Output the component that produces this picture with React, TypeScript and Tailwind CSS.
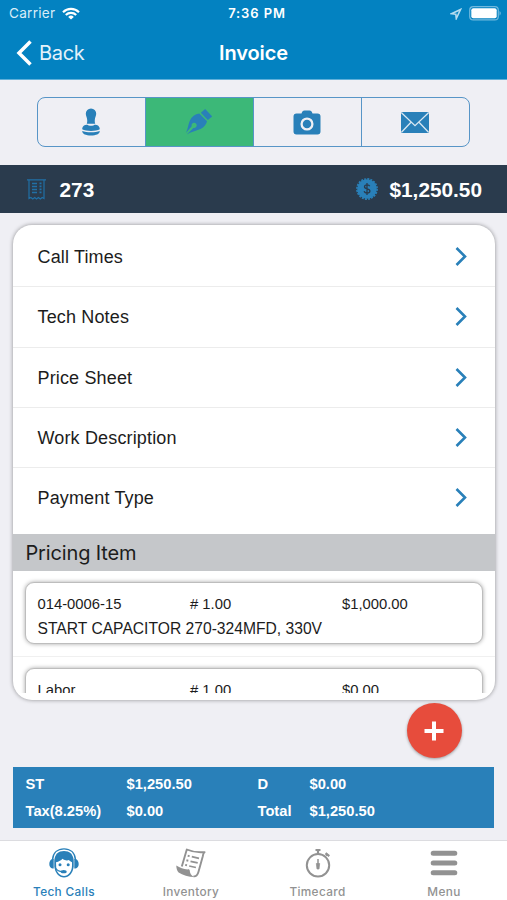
import React from "react";

const menuRows = [
  "Call Times",
  "Tech Notes",
  "Price Sheet",
  "Work Description",
  "Payment Type",
];

const pricingItems = [
  {
    code: "014-0006-15",
    qty: "# 1.00",
    price: "$1,000.00",
    description: "START CAPACITOR 270-324MFD, 330V",
  },
  { code: "Labor", qty: "# 1.00", price: "$0.00", description: "" },
];

const StampIcon = () => (
  <svg width="20" height="28" viewBox="0 0 20 28" fill="#2980b9">
    <path d="M10 .5a5.200 5.200 0 0 1 5.200 5.300c0 2.200-1.300 3.700-1.400 6.200-.1 1.800.1 3.200.5 3.700H5.700c.4-.5.6-1.900.5-3.700C6.100 9.500 4.800 8 4.800 5.800A5.200 5.200 0 0 1 10 .5z" />
    <path d="M1.200 21.300C1.200 18 3.500 16.700 6.500 16.700c1 1.400 6 1.400 7 0 3 0 5.300 1.300 5.300 4.600-4 2.100-13.600 2.100-17.600 0z" />
    <path d="M1.200 23c4.500 1.800 13.100 1.800 17.600 0 0 3-3.800 4.500-8.800 4.500S1.200 26 1.200 23z" />
  </svg>
);

const PenIcon = () => (
  <svg width="28" height="28" viewBox="0 0 28 28" fill="#2980b9">
    <path d="m20.200 1 7 7.500-4.400 3.500-7-7.200z" />
    <path d="M14.300 5.500 22 13.300c-.6 3-2.700 6-6.500 7.700C11 23 6 23.700 1.700 26.600l6.700-6.700a2.600 2.600 0 1 0-1.700-1.600L.9 25C3 20.500 3.200 16 5 12.200c1.700-3.700 5-6 9.300-6.700z" />
  </svg>
);

const CameraIcon = () => (
  <svg width="28" height="25" viewBox="0 0 28 25">
    <path
      d="M8.500 3.500C9.200 1.500 9.800.500 11.500.500h5c1.700 0 2.300 1 3 3h5a3 3 0 0 1 3 3v15a3 3 0 0 1-3 3h-21a3 3 0 0 1-3-3v-15a3 3 0 0 1 3-3z"
      fill="#2980b9"
    />
    <circle cx="14" cy="14" r="5.400" fill="none" stroke="#efeff4" strokeWidth="2.300" />
  </svg>
);

const MailIcon = () => (
  <svg width="28" height="21" viewBox="0 0 28 21">
    <rect width="28" height="21" rx="1.500" fill="#2980b9" />
    <path
      d="M.5.800 14 13.700 27.500.800M.5 20.200 10 10.200M27.500 20.200 18 10.200"
      fill="none"
      stroke="#d9e7f2"
      strokeWidth="1.300"
    />
  </svg>
);

const ReceiptIcon = () => (
  <svg width="19" height="21" viewBox="0 0 19 21" fill="none" stroke="#2170a6" strokeWidth="1.200">
    <path d="M0 .800h19M2 1v18.500l1.900-1 1.900 1.500 1.900-1.500L9.500 20l1.900-1.500 1.900 1.500 1.900-1.500 1.800 1V1" />
    <path d="M5 4.500h5M5 7.500h5M5 10.500h5M5 13.500h5" strokeWidth="1.700" />
    <path d="M13.500 3.500v12" strokeWidth="2" strokeDasharray="1.700 1.300" />
  </svg>
);

const DollarBadge = () => (
  <svg width="22" height="22" viewBox="0 0 22 22">
    <circle cx="11" cy="11" r="9.800" fill="#2980b9" />
    <circle cx="11" cy="11" r="10.100" fill="none" stroke="#2980b9" strokeWidth="1.600" strokeDasharray="2 1.173" />
    <path
      d="M13.700 8.300c-.3-1-1.300-1.500-2.600-1.500-1.500 0-2.600.7-2.600 1.900 0 2.900 5.400 1.400 5.400 4.300 0 1.300-1.100 2.100-2.800 2.100-1.600 0-2.700-.7-2.900-1.900M11 5v12"
      fill="none"
      stroke="#2a3b4d"
      strokeWidth="1.300"
    />
  </svg>
);

const HeadsetIcon = () => (
  <svg width="30" height="30" viewBox="0 0 30 30" fill="#2980b9">
    <path d="M3.500 12C4 4.500 9 .900 15 .900s11 3.600 11.500 11.100" fill="none" stroke="#2980b9" strokeWidth="1.400" />
    <path d="M5.300 12C6 6 9.500 2.900 15 2.900S24 6 24.700 12v6.500c-.7 6.500-4.700 11-9.700 11s-9-4.500-9.700-11z" />
    <path
      d="M7 14.200c2.900-.5 5.200-1.800 6.400-3.400 2.200 1.600 4.500 2 6.600 1.300.7 1.100 1.800 1.800 3 2.200v3.500c0 5.700-3.700 10.200-8 10.200-3.500 0-6.700-3-7.700-7z"
      fill="#fff"
    />
    <path d="M4.700 11v9.500H3.500C1.500 20.200.300 18.500.300 16s1.200-4.700 3.200-5zM25.300 11v9.500h1.200c2-.3 3.200-2 3.200-4.500s-1.200-4.700-3.200-5z" />
    <circle cx="11" cy="16.700" r="1.500" />
    <circle cx="19.200" cy="16.700" r="1.500" />
    <path d="M6.500 20c1.700 2.700 4 3.600 7 3.600" fill="none" stroke="#2980b9" strokeWidth="1.300" />
    <ellipse cx="14.700" cy="23.700" rx="3" ry="1.600" />
  </svg>
);

const InventoryIcon = () => (
  <svg width="30" height="30" viewBox="0 0 30 30" fill="none" stroke="#929292">
    <path
      d="M5.800 18.500 10.800 1.500c5.500 2.400 11.500 3.200 17.800 2.600-1.600 1-1.400 2.400-1.800 4.200l-4.300 15.400c-.9 3.200-2.600 5-5 4.600"
      strokeWidth="1.900"
      strokeLinejoin="round"
    />
    <path
      d="M.300 17.500c3.700 2.300 7.200 3.500 11.200 3.900 1.100-.5 2 0 2.200.9.200 2.900 1.200 5.300 4.700 6.800-5.600-.2-11.900-1.900-15.800-4.600C.900 22.500.300 20 .300 17.500z"
      fill="#929292"
      stroke="none"
    />
    <path d="m15.800 8.700 7.200 1.600M14.500 13.300l7.200 1.600M13.200 18l6.700 1.500" strokeWidth="1.700" />
    <path d="m11.700 7.700 1.900.4M10.400 12.300l1.900.4M9.200 16.900l1.800.4" strokeWidth="1.900" />
  </svg>
);

const TimerIcon = () => (
  <svg width="26" height="30" viewBox="0 0 26 30" fill="none" stroke="#929292">
    <circle cx="13" cy="17.300" r="11.200" strokeWidth="2" />
    <path d="M10.500 2h5M13 1.500v5M21 7.500l1.500-1.800" strokeWidth="2.200" />
    <path d="m20.600 5.200 3.700 3" strokeWidth="2.200" />
    <path d="M13 11v6" strokeWidth="1.500" />
    <path d="M11.300 15.500h3.400L14 21h-2z" fill="#929292" strokeWidth=".7" />
  </svg>
);

const MenuIcon = () => (
  <svg width="28" height="26" viewBox="0 0 28 26" stroke="#929292" strokeWidth="5" strokeLinecap="round">
    <path d="M3.200 3.300h21.600M3.200 13h21.600M3.200 22.700h21.600" />
  </svg>
);

const actions = [StampIcon, PenIcon, CameraIcon, MailIcon];

const tabs = [
  { title: "Tech Calls", icon: HeadsetIcon },
  { title: "Inventory", icon: InventoryIcon },
  { title: "Timecard", icon: TimerIcon },
  { title: "Menu", icon: MenuIcon },
];

const Header = () => {
  return (
    <header className="h-[80px] bg-[#0382c1] border-b border-[#5fb0da] text-white font-['Inter',sans-serif]">
      <div className="grid grid-cols-3 items-center h-[27px] pl-[9px] pr-[6px] text-[13px]">
        <div className="flex items-center gap-[7px]">
          <span className="text-[13.6px] text-[#d9edf8] tracking-[0.25px]">Carrier</span>
          <svg width="18" height="13" viewBox="0 0 18 13" fill="none" stroke="#fff" strokeWidth="2.200">
            <path d="M1 5.200a11.500 11.500 0 0 1 16 0M3.800 8a7.500 7.500 0 0 1 10.400 0" />
            <path d="M9 12.500 6.200 9.900a4 4 0 0 1 5.600 0z" fill="#fff" stroke="none" />
          </svg>
        </div>
        <p className="text-center font-semibold tracking-[0.9px] pl-[4px]">7:36 PM</p>
        <div className="flex items-center justify-end gap-[7px]">
          <svg width="12" height="12" viewBox="0 0 12 12" fill="none" stroke="#b5dcef" strokeWidth="1.600">
            <path d="M10.500 1.500 1.500 5.700l4.300.5.500 4.300z" />
          </svg>
          <svg width="32" height="15" viewBox="0 0 32 15">
            <rect x=".7" y=".7" width="28.600" height="13.200" rx="3.500" fill="none" stroke="#71b9de" strokeWidth="1.200" />
            <rect x="2.300" y="2.300" width="25.400" height="10" rx="2" fill="#fff" />
            <path d="M30.500 5v4.600c1.700-.8 1.700-3.800 0-4.600z" fill="#71b9de" />
          </svg>
        </div>
      </div>
      <div className="grid grid-cols-3 items-center h-[51px]">
        <div className="flex items-center gap-[7px] pl-4">
          <svg width="16" height="26" viewBox="0 0 16 26" fill="none" stroke="#fff" strokeWidth="3.500">
            <path d="M14.500 1.500 3 13l11.500 11.500" />
          </svg>
          <span className="text-[20px] text-[#e3f2fa] tracking-[-0.3px]">Back</span>
        </div>
        <p className="text-center text-[20px] font-semibold tracking-[-0.1px]">Invoice</p>
      </div>
    </header>
  );
};

const PricingCard = ({ item }: { item: (typeof pricingItems)[number] }) => {
  return (
    <div className="px-3 pt-[11px] pb-3 border-b border-[#f0f0f0]">
      <div className="h-[62px] rounded-[9px] border border-[#bdbdbd] bg-white shadow-[0_0_4px_rgba(0,0,0,0.35)] pl-[11.500px] pt-[11px]">
        <div className="grid grid-cols-[152.500px_152px_1fr] text-[14.8px] leading-[21px]">
          <p>{item.code}</p>
          <p>{item.qty}</p>
          <p>{item.price}</p>
        </div>
        <p className="text-[15.650px] leading-[27px]">{item.description}</p>
      </div>
    </div>
  );
};

const App = () => {
  return (
    <div className="w-[507px] h-[900px] overflow-hidden flex flex-col bg-[#efeff4] font-['Liberation_Sans',sans-serif] text-[#1c1c1c]">
      <Header />

      <div className="mt-[17px] ml-[37px] w-[433px] h-[50px] flex shrink-0 overflow-hidden rounded-[8px] border-[1.5px] border-[#5795c7] divide-x divide-[#5795c7]">
        {actions.map((Icon, i) => {
          return (
            <div
              key={i}
              className={`flex-1 flex items-center justify-center pr-[1.500px] ${i === 1 ? "bg-[#3cb878]" : ""}`}
            >
              <Icon />
            </div>
          );
        })}
      </div>

      <div className="mt-[18px] h-[48px] shrink-0 bg-[#2a3b4d] text-white font-bold text-[20.800px] flex items-center justify-between pl-[27px] pr-[25px]">
        <div className="flex items-center gap-[13.500px]">
          <ReceiptIcon />
          <p className="pt-[2px]">273</p>
        </div>
        <div className="flex items-center gap-[11px]">
          <DollarBadge />
          <p className="pt-[2px]">$1,250.50</p>
        </div>
      </div>

      <div className="mt-3 mx-[13px] w-[482px] h-[475px] shrink-0 rounded-[19px] bg-white overflow-hidden pb-[7px] shadow-[0_0_4px_rgba(0,0,0,0.4)]">
        <div className="h-[468px] overflow-hidden">
          <div className="h-[309px] pt-[2px]">
            {menuRows.map((row) => {
              return (
                <div
                  key={row}
                  className="h-[60.250px] flex items-center justify-between pl-[24.500px] pr-[28px] border-b border-[#ececec] last:border-transparent"
                >
                  <p className="text-[18px] tracking-[0.15px] pt-[2px]">{row}</p>
                  <svg width="12" height="19" viewBox="0 0 12 19" fill="none" stroke="#2980b9" strokeWidth="2.600">
                    <path d="m1.500 1 8.500 8.500L1.500 18" />
                  </svg>
                </div>
              );
            })}
          </div>
          <p className="h-[37px] bg-[#c5c7ca] pl-[12.500px] text-[20px] leading-[39px] font-['Inter',sans-serif] tracking-[-0.15px]">
            Pricing Item
          </p>
          {pricingItems.map((item) => {
            return <PricingCard key={item.code} item={item} />;
          })}
        </div>
      </div>

      <div className="h-[67px] shrink-0 flex justify-end pt-[3px] pr-[45.500px]">
        <button className="w-[55px] h-[55px] rounded-full bg-[#e74c3c] flex items-center justify-center shadow-[0_1px_3px_rgba(0,0,0,0.35)]">
          <svg width="20" height="20" viewBox="0 0 20 20" stroke="#fff" strokeWidth="4">
            <path d="M10 .5v19M.5 10h19" />
          </svg>
        </button>
      </div>

      <div className="mx-[13px] h-[61px] shrink-0 bg-[#2980b9] text-white font-bold text-[14.700px] grid grid-cols-[101px_131px_52px_1fr] leading-[27px] content-start pt-[4px] pl-[12.500px]">
        <p>ST</p>
        <p>$1,250.50</p>
        <p>D</p>
        <p>$0.00</p>
        <p>Tax(8.25%)</p>
        <p>$0.00</p>
        <p>Total</p>
        <p>$1,250.50</p>
      </div>

      <nav className="mt-3 h-[60px] shrink-0 bg-white border-t border-[#dcdce0] grid grid-cols-[128px_126px_127px_126px] font-['Inter',sans-serif] text-[11.800px] font-medium tracking-[0.35px]">
        {tabs.map(({ title, icon: Icon }, i) => {
          return (
            <div
              key={title}
              className={`flex flex-col items-center pt-[7px] ${i === 0 ? "text-[#2980b9]" : "text-[#929292]"}`}
            >
              <div className="h-[30px] flex items-center">
                <Icon />
              </div>
              <p className="mt-[5px] leading-[18px]">{title}</p>
            </div>
          );
        })}
      </nav>
    </div>
  );
};

export default App;
